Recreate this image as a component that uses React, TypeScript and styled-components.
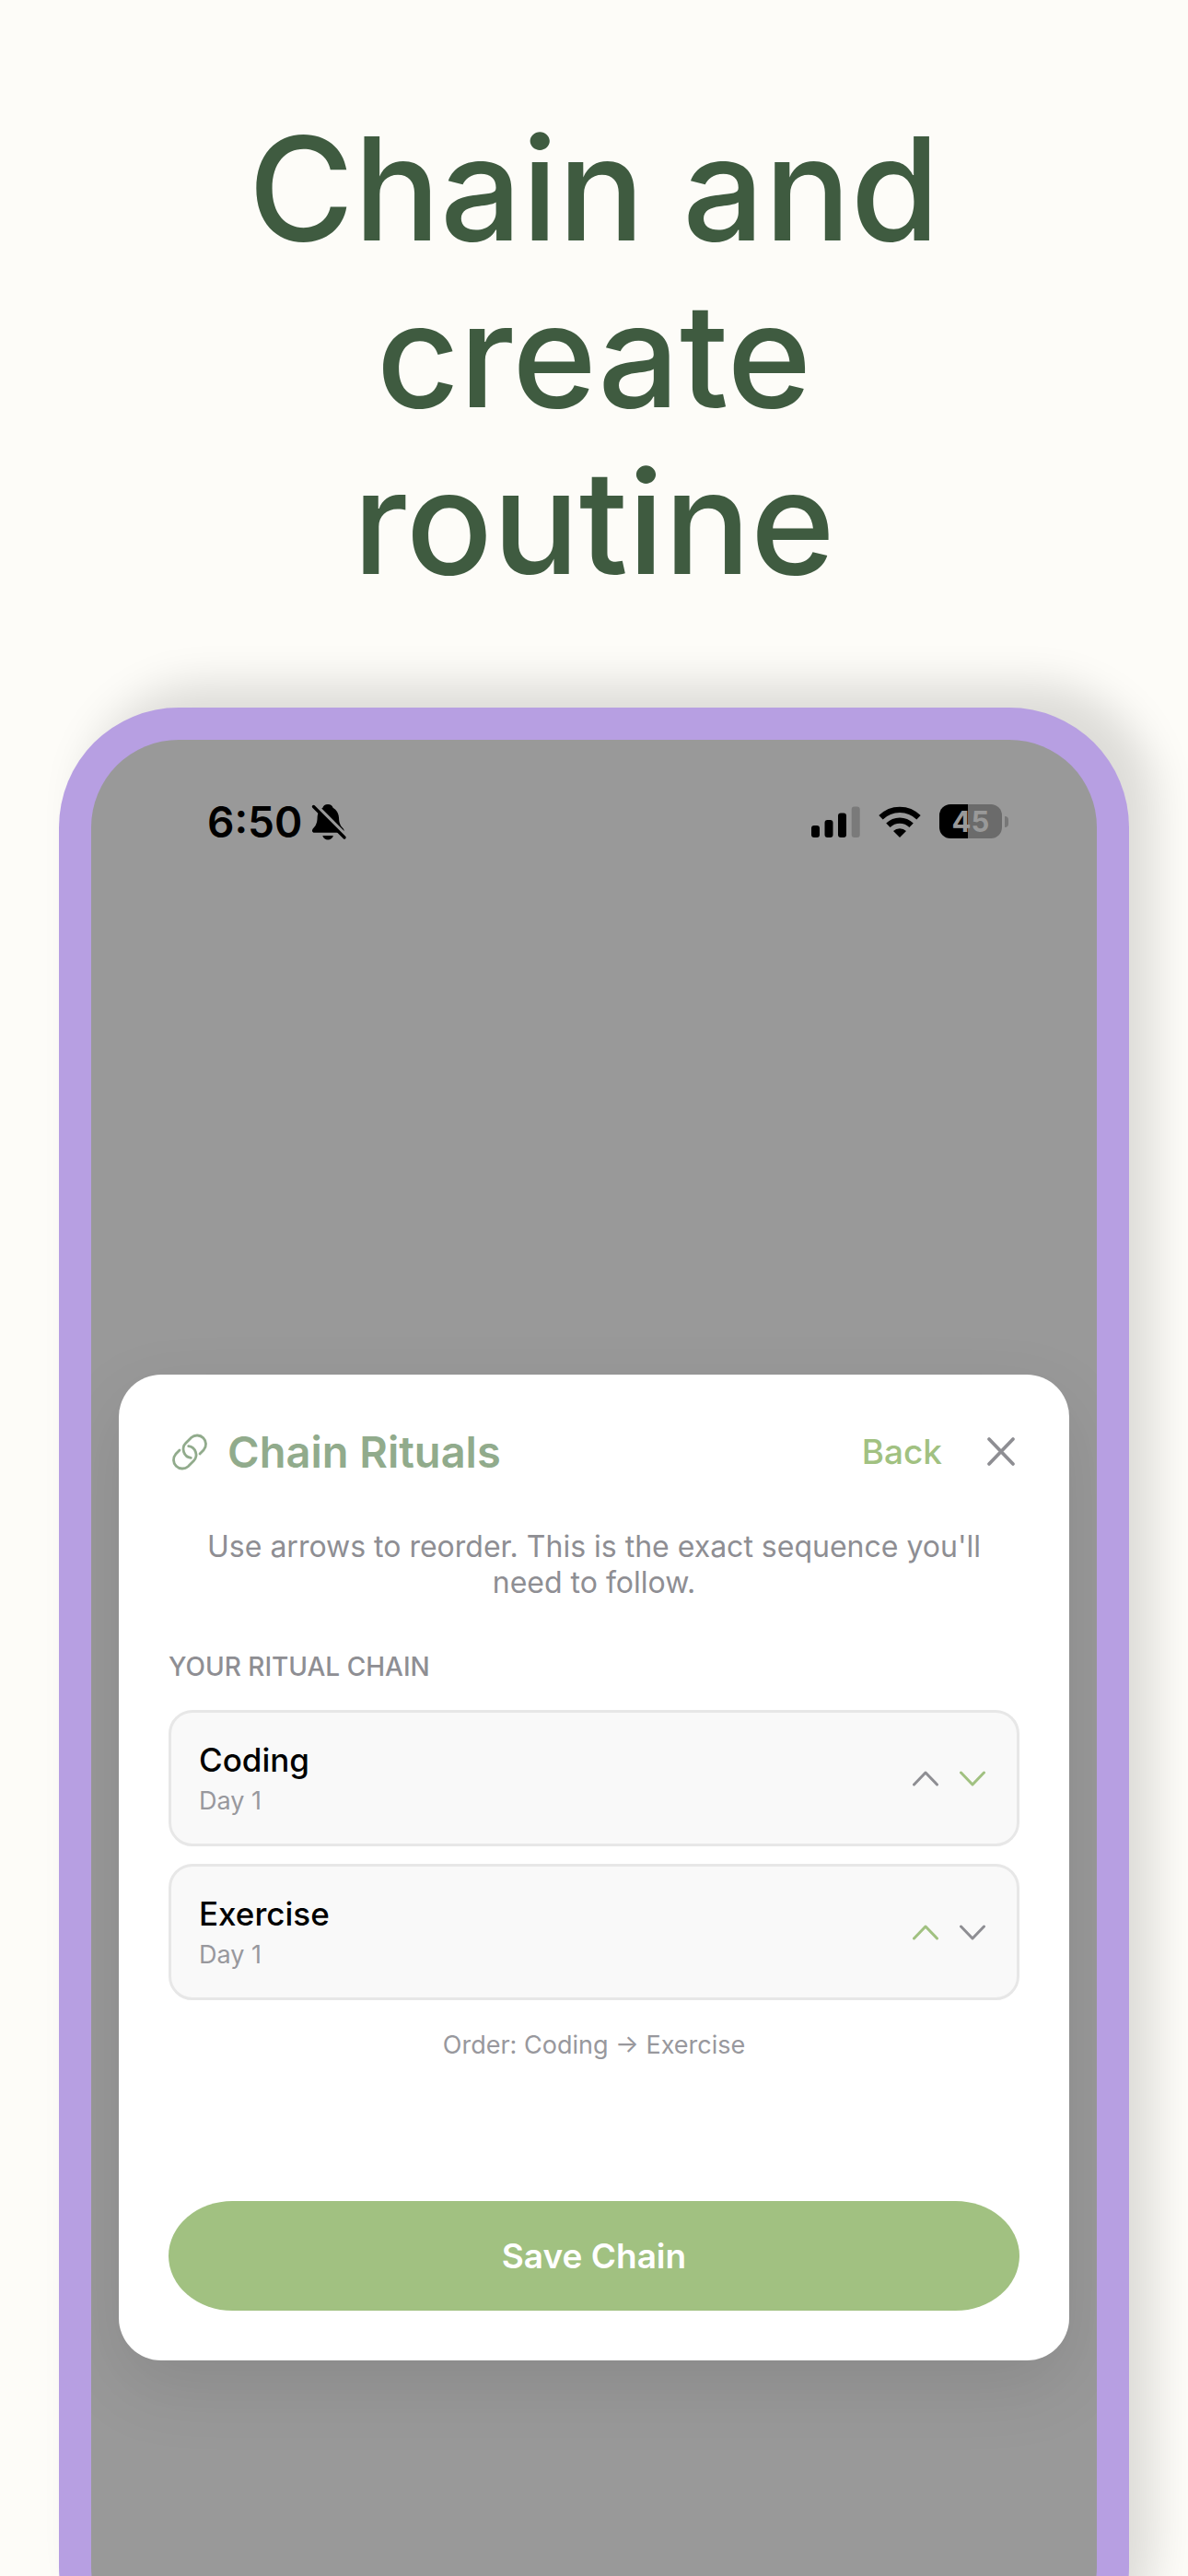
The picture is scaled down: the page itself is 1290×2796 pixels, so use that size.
import React, { useState } from "react";
import styled, { createGlobalStyle } from "styled-components";

const colors = {
  page: "#fdfcf8",
  headline: "#3f5b40",
  frame: "#b79fe2",
  screen: "#999999",
  title: "#91ab8c",
  accent: "#a1c181",
  muted: "#8e8e93",
  faint: "#98989d",
  card: "#f9f9f9",
  line: "#e7e7e7",
};

const GlobalStyle = createGlobalStyle`
  *, *::before, *::after { box-sizing: border-box; }
  body {
    margin: 0;
    background: ${colors.page};
    font-family: Inter, "Liberation Sans", sans-serif;
  }
  h1, h2, h3, p, ol { margin: 0; padding: 0; }
  button {
    border: 0;
    padding: 0;
    background: none;
    font-family: inherit;
    cursor: pointer;
  }
`;

const Page = styled.main`
  display: flex;
  flex-direction: column;
  height: 100vh;
  min-height: 2200px;
  overflow: hidden;
  padding: 114px 64px 0;
`;

const Headline = styled.h1`
  align-self: center;
  max-width: 860px;
  text-align: center;
  font-size: 156px;
  line-height: 181px;
  font-weight: 500;
  color: ${colors.headline};
`;

const Phone = styled.section`
  flex: 1;
  display: flex;
  margin: 111px 0 -120px;
  padding: 35px;
  border-radius: 130px;
  background: ${colors.frame};
  box-shadow: 28px -26px 46px rgba(0, 0, 0, 0.13);
`;

const Screen = styled.div`
  flex: 1;
  display: flex;
  flex-direction: column;
  overflow: hidden;
  border-radius: 95px;
  background: ${colors.screen};
`;

const StatusBar = styled.header`
  display: flex;
  align-items: center;
  justify-content: space-between;
  padding: 60px 96px 0 126px;
  height: 117px;
`;

const StatusGroup = styled.div<{ $gap: number }>`
  display: flex;
  align-items: center;
  gap: ${(p) => p.$gap}px;
`;

const Time = styled.time`
  font-size: 46px;
  line-height: 56px;
  font-weight: 600;
  color: #000;
`;

const Battery = styled.div`
  display: flex;
  align-items: center;
  gap: 3px;
`;

const BatteryBody = styled.div<{ $level: number }>`
  display: grid;
  place-items: center;
  width: 68px;
  height: 37px;
  border-radius: 12px;
  background: linear-gradient(to right, #000 ${(p) => p.$level}%, #6b6b6b ${(p) => p.$level}%);
  color: ${colors.screen};
  font-size: 31px;
  line-height: 37px;
  font-weight: 700;
`;

const BatteryTip = styled.div`
  width: 4px;
  height: 12px;
  border-radius: 0 4px 4px 0;
  background: #777;
`;

const Dialog = styled.div`
  margin: 572px 30px 0;
  padding: 54px;
  display: flex;
  flex-direction: column;
  background: #fff;
  border-radius: 46px;
  box-shadow: 0 28px 80px rgba(0, 0, 0, 0.1);
`;

const DialogHeader = styled.div`
  display: flex;
  align-items: center;
  justify-content: space-between;
  height: 60px;
`;

const DialogTitle = styled.div`
  display: flex;
  align-items: center;
  gap: 18px;
  color: ${colors.title};

  h2 {
    font-size: 47px;
    line-height: 60px;
    font-weight: 600;
  }
`;

const DialogActions = styled.div`
  display: flex;
  align-items: center;
  gap: 46px;
`;

const BackButton = styled.button`
  font-size: 37px;
  line-height: 44px;
  font-weight: 500;
  color: ${colors.accent};
`;

const IconButton = styled.button<{ $active?: boolean }>`
  display: grid;
  place-items: center;
  color: ${(p) => (p.$active ? colors.accent : colors.muted)};
`;

const Hint = styled.p`
  margin-top: 53px;
  padding: 0 24px;
  text-align: center;
  font-size: 32px;
  line-height: 39px;
  color: ${colors.muted};
`;

const SectionLabel = styled.h3`
  margin-top: 55px;
  font-size: 28px;
  line-height: 34px;
  font-weight: 500;
  text-transform: uppercase;
  color: ${colors.muted};
`;

const RitualList = styled.ol`
  display: flex;
  flex-direction: column;
  gap: 19px;
  margin-top: 30px;
  list-style: none;
`;

const RitualCard = styled.li`
  display: flex;
  align-items: center;
  justify-content: space-between;
  height: 148px;
  padding: 0 33px 0 30px;
  border: 3px solid ${colors.line};
  border-radius: 26px;
  background: ${colors.card};
`;

const RitualText = styled.div`
  display: flex;
  flex-direction: column;
  gap: 6px;
`;

const RitualName = styled.span`
  font-size: 35px;
  line-height: 44px;
  font-weight: 500;
  color: #000;
`;

const Small = styled.span`
  font-size: 27px;
  line-height: 34px;
  color: ${colors.faint};
`;

const Arrows = styled.div`
  display: flex;
  gap: 22px;
`;

const Order = styled(Small)`
  margin-top: 32px;
  text-align: center;
`;

const SaveButton = styled.button`
  height: 119px;
  margin-top: 152px;
  border-radius: 70px / 60px;
  background: ${colors.accent};
  color: #fff;
  font-size: 37px;
  line-height: 44px;
  font-weight: 600;
`;

const BellOff = () => (
  <svg width="40" height="42" viewBox="0 0 40 42" aria-label="Silent mode">
    <path
      d="M19 2c-3 0-5 1.600-5.600 3.800C9.500 8 7.800 12 7.600 16.500 7.400 22 6.200 24.800 3.200 28c-2 2.200-1.400 4.800 1.200 4.800h29.800c2.600 0 3.200-2.600 1.200-4.800-3-3.200-4.200-6-4.400-11.500C30.800 12 28.500 8 24.600 5.800 24 3.600 22 2 19 2z"
      fill="#000"
    />
    <path d="M13.300 36h11.600c-.8 2.800-3 4.600-5.800 4.600s-5-1.800-5.800-4.600z" fill="#000" />
    <path d="M3 0 40 37" stroke={colors.screen} strokeWidth="4" />
    <path d="M6 7 2 12V3z" fill={colors.screen} />
    <path d="M3.500 4.500 37 38" stroke="#000" strokeWidth="3.400" strokeLinecap="round" />
  </svg>
);

const Signal = () => (
  <svg width="53" height="34" viewBox="0 0 53 34" aria-label="Signal strength">
    <rect x="0" y="21" width="9" height="13" rx="3" />
    <rect x="14.500" y="15" width="9" height="19" rx="3" />
    <rect x="29" y="7.500" width="9" height="26.500" rx="3" />
    <rect x="43.700" y="0.500" width="9" height="33.500" rx="3" fill="#7a7a7a" />
  </svg>
);

const Wifi = () => (
  <svg width="46" height="34" viewBox="0 0 46 34" aria-label="Wi-Fi">
    <path d="M2.500 12.300a29 29 0 0 1 41 0" fill="none" stroke="#000" strokeWidth="6.200" />
    <path d="M10.400 20.800a18 18 0 0 1 25.200 0" fill="none" stroke="#000" strokeWidth="6.200" />
    <path d="M23 34l-7-7a10 10 0 0 1 14 0z" />
  </svg>
);

const LinkIcon = () => (
  <svg width="46" height="46" viewBox="0 0 46 46" fill="none" stroke="currentColor" strokeWidth="2.800" strokeLinecap="round" aria-hidden="true">
    <path d="M34 25 38.200 20.700A9.500 9.500 0 0 0 24.800 7.300L18.800 13.300A9.500 9.500 0 0 0 24.300 29.400" />
    <path d="M12 21 7.800 25.300A9.500 9.500 0 0 0 21.200 38.700L27.200 32.700A9.500 9.500 0 0 0 21.700 16.600" />
  </svg>
);

const CloseIcon = () => (
  <svg width="38" height="38" viewBox="0 0 38 38" fill="none" stroke="currentColor" strokeWidth="3.800" strokeLinecap="round" aria-hidden="true">
    <path d="M5 5 31 32M31 5 5 32" />
  </svg>
);

const Chevron = ({ up }: { up?: boolean }) => (
  <svg width="29" height="18" viewBox="0 0 29 18" fill="none" stroke="currentColor" strokeWidth="3" strokeLinecap="round" strokeLinejoin="round" aria-hidden="true">
    <path d={up ? "M1.500 16 14 3 26.500 16" : "M1.500 3 14 16 26.500 3"} />
  </svg>
);

export default function App() {
  const [rituals, setRituals] = useState([
    { name: "Coding", day: 1 },
    { name: "Exercise", day: 1 },
  ]);

  const move = (from: number, to: number) => {
    if (to < 0 || to >= rituals.length) return;
    const next = [...rituals];
    [next[from], next[to]] = [next[to], next[from]];
    setRituals(next);
  };

  return (
    <>
      <GlobalStyle />
      <Page>
        <Headline>
          Chain and
          <br />
          create
          <br />
          routine
        </Headline>
        <Phone>
          <Screen>
            <StatusBar>
              <StatusGroup $gap={9}>
                <Time>6:50</Time>
                <BellOff />
              </StatusGroup>
              <StatusGroup $gap={20}>
                <Signal />
                <Wifi />
                <Battery>
                  <BatteryBody $level={46}>45</BatteryBody>
                  <BatteryTip />
                </Battery>
              </StatusGroup>
            </StatusBar>
            <Dialog role="dialog" aria-labelledby="dialog-title">
              <DialogHeader>
                <DialogTitle>
                  <LinkIcon />
                  <h2 id="dialog-title">Chain Rituals</h2>
                </DialogTitle>
                <DialogActions>
                  <BackButton type="button">Back</BackButton>
                  <IconButton type="button" aria-label="Close">
                    <CloseIcon />
                  </IconButton>
                </DialogActions>
              </DialogHeader>
              <Hint>Use arrows to reorder. This is the exact sequence you'll need to follow.</Hint>
              <SectionLabel>Your ritual chain</SectionLabel>
              <RitualList>
                {rituals.map((ritual, i) => (
                  <RitualCard key={ritual.name}>
                    <RitualText>
                      <RitualName>{ritual.name}</RitualName>
                      <Small>Day {ritual.day}</Small>
                    </RitualText>
                    <Arrows>
                      <IconButton type="button" aria-label={`Move ${ritual.name} up`} $active={i > 0} onClick={() => move(i, i - 1)}>
                        <Chevron up />
                      </IconButton>
                      <IconButton
                        type="button"
                        aria-label={`Move ${ritual.name} down`}
                        $active={i < rituals.length - 1}
                        onClick={() => move(i, i + 1)}
                      >
                        <Chevron />
                      </IconButton>
                    </Arrows>
                  </RitualCard>
                ))}
              </RitualList>
              <Order>Order: {rituals.map((r) => r.name).join(" → ")}</Order>
              <SaveButton type="button">Save Chain</SaveButton>
            </Dialog>
          </Screen>
        </Phone>
      </Page>
    </>
  );
}
